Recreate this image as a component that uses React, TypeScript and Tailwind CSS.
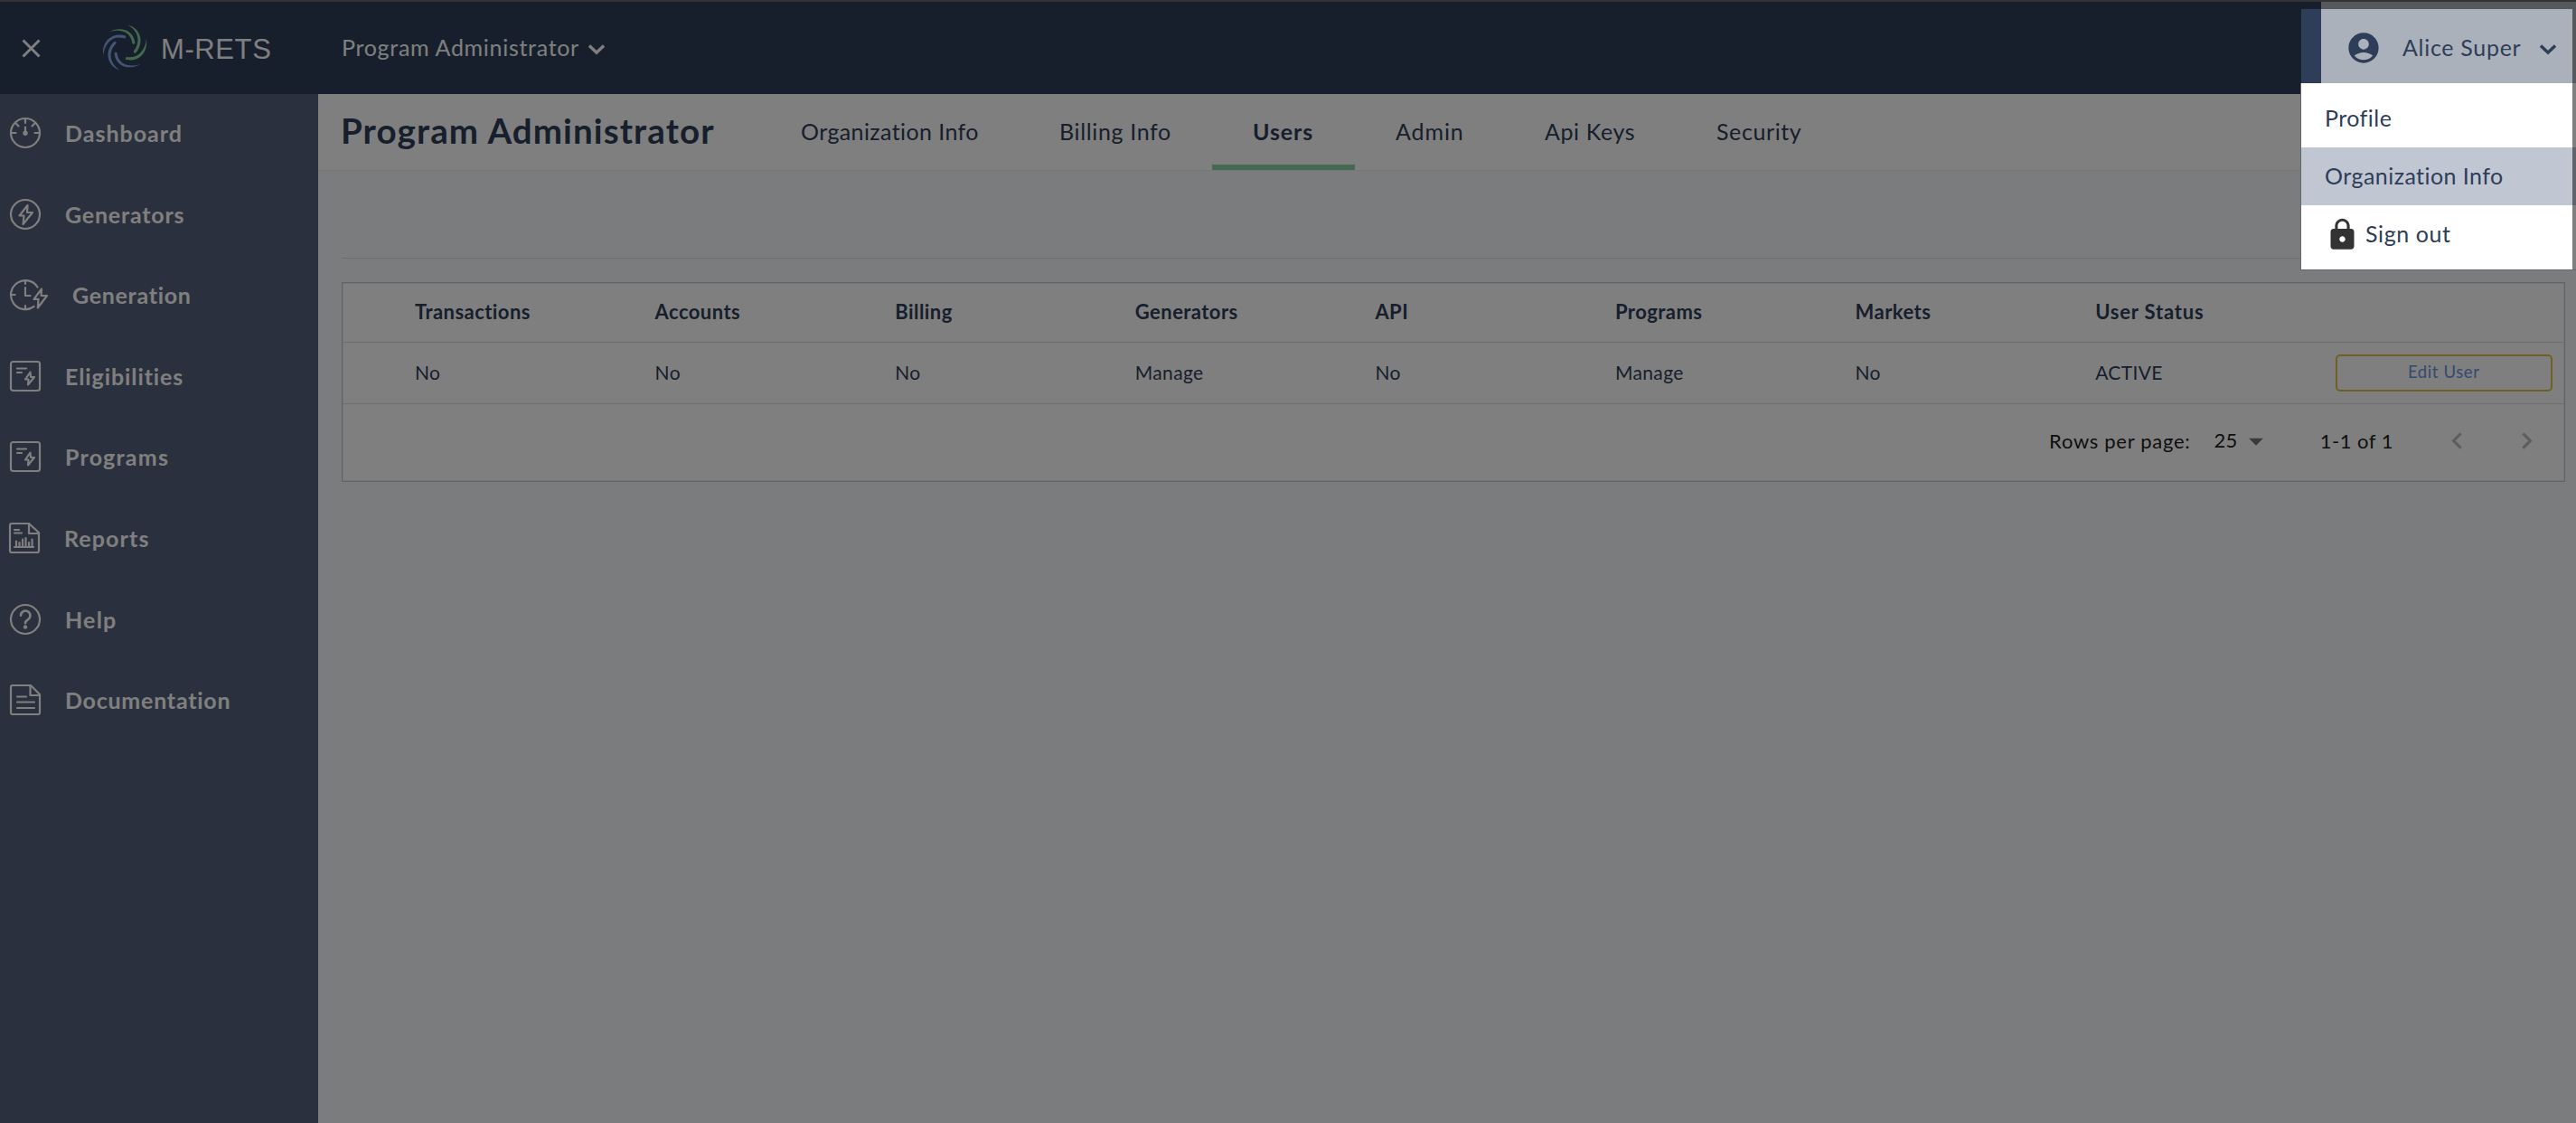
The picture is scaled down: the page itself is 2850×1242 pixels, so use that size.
import React from "react";
import {
  MdAccountCircle,
  MdArrowDropDown,
  MdChevronLeft,
  MdChevronRight,
  MdLock,
} from "react-icons/md";

const Bolt = ({ d }: { d: string }) => <path d={d} />;

function NavIcon({ wide, children }: { wide?: boolean; children: React.ReactNode }) {
  return (
    <svg
      className={wide ? "h-9 w-11 shrink-0" : "h-9 w-9 shrink-0"}
      viewBox={wide ? "0 0 44 36" : "0 0 36 36"}
      fill="none"
      stroke="currentColor"
      strokeWidth="2.200"
      strokeLinecap="round"
      strokeLinejoin="round"
    >
      {children}
    </svg>
  );
}

const DashboardIcon = () => (
  <NavIcon>
    <circle cx="18" cy="18" r="16" />
    <path d="M18 3v4M3 18h4.5M28.5 18H33M8 8l2.5 2.5M28 8l-2.5 2.5M18 11.5v5" />
    <circle cx="18" cy="18.3" r="1.6" fill="currentColor" />
  </NavIcon>
);

const GeneratorsIcon = () => (
  <NavIcon>
    <circle cx="18" cy="18" r="16" />
    <Bolt d="M20.5 8 11.5 19.5h5L15.5 29 26 16h-6z" />
  </NavIcon>
);

const GenerationIcon = () => (
  <NavIcon wide>
    <path d="M31.5 9.5A16 16 0 1 0 27.5 31M18 2v4M2 18h4.500M18 30v4M18 10v9h5.500" />
    <Bolt d="M36 11.500 27.500 22.800h5L31.800 32.500 42 19h-6.500z" />
  </NavIcon>
);

const CertificateIcon = () => (
  <NavIcon>
    <rect x="2" y="2" width="32" height="32" rx="2.5" />
    <path d="M9 9.500h10M9 14h5" />
    <Bolt d="M23.500 13.500 18 21.500h3.500L21 27.500 28 19h-4z" />
  </NavIcon>
);

const ReportsIcon = () => (
  <NavIcon>
    <path d="M4 2h19l11 10v20a2 2 0 0 1-2 2H4a2 2 0 0 1-2-2V4a2 2 0 0 1 2-2z" />
    <path d="M23 2v11h11M7 9h5M7 12.500h8M7 28h21" />
    <path d="M9 28v-6.500M12.500 28v-5M16 28v-8.500M19.500 28V18M23 28v-5M26.500 28v-8.500" />
  </NavIcon>
);

const HelpIcon = () => (
  <NavIcon>
    <circle cx="18" cy="18" r="16" />
    <path strokeWidth="2.6" d="M13 13.800a5.200 5.200 0 1 1 8.200 4.200c-2 1.400-3.200 2-3.200 4.200" />
    <circle cx="18" cy="26.500" r="1.100" fill="currentColor" />
  </NavIcon>
);

const DocumentIcon = () => (
  <NavIcon>
    <path d="M4 2h20l10 10v20a2 2 0 0 1-2 2H4a2 2 0 0 1-2-2V4a2 2 0 0 1 2-2z" />
    <path d="M23.500 2v11H34M9 14.500h10M9 20.500h19M9 27h19" />
  </NavIcon>
);

const nav = [
  { label: "Dashboard", Icon: DashboardIcon, cls: "tracking-[1px]" },
  { label: "Generators", Icon: GeneratorsIcon, cls: "tracking-[0.8px]" },
  { label: "Generation", Icon: GenerationIcon, cls: "tracking-[0.7px]" },
  { label: "Eligibilities", Icon: CertificateIcon, cls: "tracking-[0.9px]" },
  { label: "Programs", Icon: CertificateIcon, cls: "tracking-[1.2px]" },
  { label: "Reports", Icon: ReportsIcon, cls: "-ml-px tracking-[1.1px]" },
  { label: "Help", Icon: HelpIcon, cls: "tracking-[1.2px]" },
  { label: "Documentation", Icon: DocumentIcon, cls: "tracking-[0.75px]" },
];

const tabs = [
  { label: "Organization Info", cls: "w-[286px] tracking-[0.4px]" },
  { label: "Billing Info", cls: "w-[214px] tracking-[0.65px]" },
  {
    label: "Users",
    cls: "w-[158px] border-b-[6px] border-[#8bd3a4] pt-[6px] font-bold tracking-[0.9px]",
  },
  { label: "Admin", cls: "w-[165px] tracking-[0.9px]" },
  { label: "Api Keys", cls: "w-[190px] tracking-[0.6px]" },
  { label: "Security", cls: "tracking-[0.6px]" },
];

const columns = [
  ["Transactions", "No"],
  ["Accounts", "No"],
  ["Billing", "No"],
  ["Generators", "Manage"],
  ["API", "No"],
  ["Programs", "Manage"],
  ["Markets", "No"],
  ["User Status", "ACTIVE"],
];

const Swirl = () => (
  <svg className="h-[54px] w-[52px]" viewBox="66 48 156 162">
    <g fill="#86d39a">
      <path d="M90 77C128 55 172 68 178 110a4.500 4.500 0 0 1-9 3C164 76 130 62 90 77z" />
      <path d="M155 53C196 62 210 110 182 144a4.500 4.500 0 0 1-8-5C200 105 186 70 155 53z" />
      <path d="M216 98C222 145 190 176 151 168a4.500 4.500 0 0 1 0-9C186 164 212 140 216 98z" />
    </g>
    <g fill="#84aaec">
      <path d="M73 153C65 105 106 76 144 88a4.500 4.500 0 0 1-2 9C108 86 78 108 73 153z" />
      <path d="M127 203C84 188 76 139 108 109a4.500 4.500 0 0 1 7 6C86 145 96 180 127 203z" />
      <path d="M198 182C160 205 114 191 110 149a4.500 4.500 0 0 1 9-2C124 184 160 196 198 182z" />
    </g>
  </svg>
);

const Chevron = () => (
  <svg
    className="mt-[3px] h-3 w-[18px]"
    viewBox="0 0 18 12"
    fill="none"
    stroke="currentColor"
    strokeWidth="3.400"
    strokeLinejoin="miter"
  >
    <path d="M1 1.500 9 9.200 17 1.500" />
  </svg>
);

export default function App() {
  return (
    <div className="relative flex h-[1242px] w-[2850px] flex-col overflow-hidden border-t-2 border-[#333] bg-[#f6f8fc] font-[Lato,sans-serif] text-[#2e3e58]">
      <header className="flex h-[102px] shrink-0 items-stretch bg-[#2e3e58] text-white">
        <div className="flex w-[378px] items-center pl-6">
          <svg className="h-[21px] w-[21px]" viewBox="0 0 21 21" stroke="currentColor" strokeWidth="3">
            <path d="M1.500 1.500 19.500 19.500M19.500 1.500 1.500 19.500" />
          </svg>
          <div className="ml-[67px] flex items-center gap-[14px]">
            <Swirl />
            <span className="pt-[2px] font-['Liberation_Sans',sans-serif] text-[31px] leading-none tracking-[0.6px]">
              M-RETS
            </span>
          </div>
        </div>
        <div className="flex items-center gap-[10px]">
          <span className="text-[25px] tracking-[0.7px]">Program Administrator</span>
          <Chevron />
        </div>
        <div className="ml-auto flex w-[282px] items-center bg-[#abb1bb] pl-[27px] text-[#2e3e58]">
          <MdAccountCircle className="h-10 w-10" />
          <span className="ml-[23px] text-[25px] tracking-[0.7px]">Alice Super</span>
          <span className="ml-[21px]">
            <Chevron />
          </span>
        </div>
      </header>

      <div className="flex grow">
        <aside className="w-[352px] shrink-0 bg-[#54607a] text-white">
          {nav.map(({ label, Icon, cls }) => (
            <div key={label} className="flex h-[89.600px] items-start pt-[25px] pl-[10px]">
              <div className={`flex items-center gap-[26px] ${cls}`}>
                <Icon />
                <span className="text-[25px] leading-9 font-bold">{label}</span>
              </div>
            </div>
          ))}
        </aside>

        <main className="min-w-0 grow">
          <div className="flex h-[85px] items-stretch border-b border-[#eaecf0] bg-white pl-[25px]">
            <h1 className="flex w-[464px] items-center pb-[2px] text-[38.500px] font-bold tracking-[1.1px] whitespace-nowrap">
              Program Administrator
            </h1>
            {tabs.map(({ label, cls }) => (
              <div
                key={label}
                className={`flex shrink-0 items-center pl-[45px] text-[25px] whitespace-nowrap ${cls}`}
              >
                {label}
              </div>
            ))}
          </div>

          <div className="pr-3 pl-[26px]">
            <div className="h-[97px] border-b border-[#d8dade]" />
            <section className="mt-[26px] h-[221px] border border-[#c0c6d2] bg-white">
              <div className="h-[219px] border border-[#ececee]">
                <div className="flex h-[65px] items-center border-b border-[#dcdcdc] pb-[3px] pl-[79px] text-[22px] font-bold tracking-[0.45px]">
                  {columns.map(([h]) => (
                    <span
                      key={h}
                      className={h === "User Status" ? "w-[265.600px] tracking-[0.8px]" : "w-[265.600px]"}
                    >
                      {h}
                    </span>
                  ))}
                </div>
                <div className="flex h-[68px] items-center border-b border-[#dcdcdc] pl-[79px] text-[21px] tracking-[0.35px]">
                  {columns.map(([h, v]) => (
                    <span key={h} className="w-[265.600px] shrink-0 pb-[2px]">
                      {v}
                    </span>
                  ))}
                  <button className="h-[41px] w-[240px] shrink-0 rounded-[5px] border-[2px] border-[#dcc040] pb-px text-[18.500px] tracking-[0.6px] text-[#6b94dc]">
                    Edit User
                  </button>
                </div>
                <div className="flex h-[83px] items-center justify-end pr-[22px] pb-[2px] text-[22px] text-[#212121]">
                  <span className="pb-px tracking-[0.7px]">Rows per page:</span>
                  <span className="ml-[26px] pb-[3px] tracking-[0.4px]">25</span>
                  <MdArrowDropDown className="ml-px h-[38px] w-[38px] text-[#757575]" />
                  <span className="ml-[52px] pb-px tracking-[0.5px]">1-1 of 1</span>
                  <MdChevronLeft className="ml-[52px] h-[37px] w-[37px] text-[#bdbdbd]" />
                  <MdChevronRight className="ml-[40px] h-[37px] w-[37px] text-[#bdbdbd]" />
                </div>
              </div>
            </section>
          </div>
        </main>
      </div>

      <div className="absolute top-[90px] left-[2545px] h-[207px] w-[305px] border-b border-l border-[#c6ccd8] bg-white pt-[7px] text-[25px] tracking-[0.45px]">
        <div className="flex h-16 items-center pl-[26px]">Profile</div>
        <div className="flex h-16 items-center bg-[#c1c6d3] pl-[26px]">Organization Info</div>
        <div className="flex h-16 items-center pl-[26px]">
          <MdLock className="h-[39px] w-[39px] text-[#333]" />
          <span className="ml-[6px] tracking-[0.6px]">Sign out</span>
        </div>
      </div>

      <div className="absolute top-[8px] left-[2546px] h-[288px] w-[300px] shadow-[0_0_0_3000px_rgba(0,0,0,0.5)]" />
    </div>
  );
}
